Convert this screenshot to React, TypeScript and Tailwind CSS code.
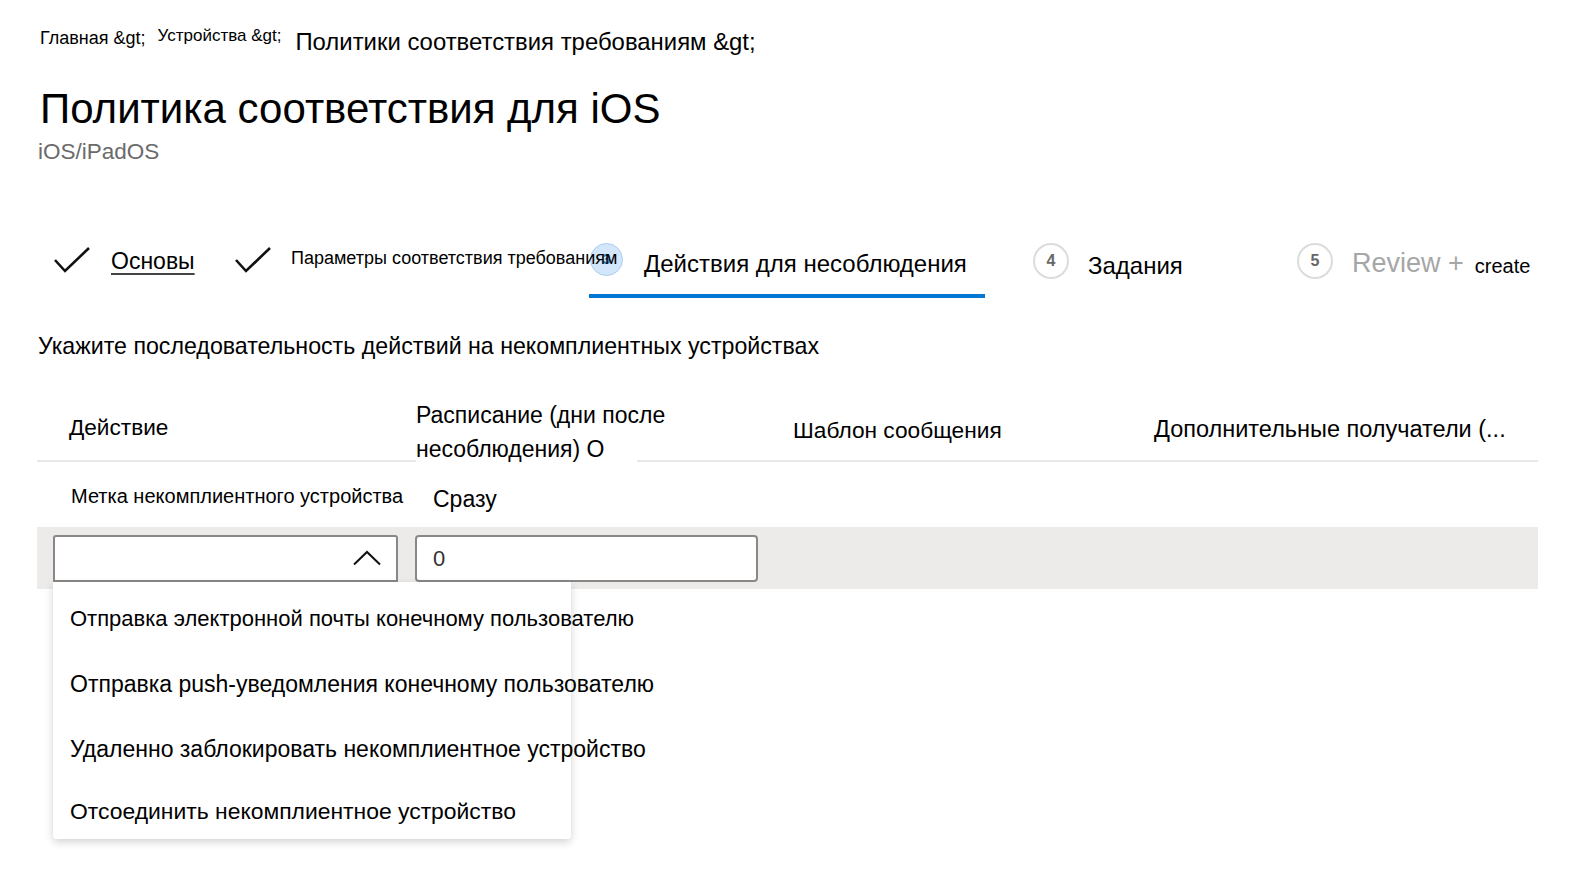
import React from "react";

const F = { fontFamily: "'Liberation Sans', Arial, sans-serif" };

function Check() {
  return (
    <svg width="38" height="28" viewBox="0 0 38 28" fill="none">
      <path d="M2 14 L12 25 L36 2" stroke="#111" strokeWidth="2.6" />
    </svg>
  );
}

function Circle({ n }: { n: string }) {
  return (
    <div className="w-[36px] h-[36px] shrink-0 mb-[10px] rounded-full border-2 border-[#dcdcdc] flex items-center justify-center text-[16px] font-bold text-[#666]">
      {n}
    </div>
  );
}

export default function App() {
  return (
    <div className="w-[1592px] h-[892px] bg-white text-black overflow-hidden" style={F}>
      {/* header */}
      <div className="pl-[40px]">
        <div className="flex items-start h-[56px] whitespace-nowrap">
          <span className="text-[18px] leading-none mt-[29px]">Главная &amp;gt;</span>
          <span className="text-[17px] leading-none ml-[12px] mt-[27px]">Устройства &amp;gt;</span>
          <span className="text-[23.9px] leading-none ml-[14px] mt-[30px]">Политики соответствия требованиям &amp;gt;</span>
        </div>
        <h1 className="text-[42px] leading-none mt-[32px] font-normal">Политика соответствия для iOS</h1>
        <div className="text-[22.5px] leading-none mt-[11px] text-[#6b6b6b] -ml-[2px]">iOS/iPadOS</div>
      </div>

      {/* tabs */}
      <div className="flex items-center h-[64px] mt-[70px] pl-[53px] whitespace-nowrap">
        <div className="w-[181px] flex items-center">
          <div className="mb-[12px]"><Check /></div>
          <span className="ml-[20px] mb-[8px] text-[23px] leading-none underline decoration-[#444] decoration-[1.5px] underline-offset-[4px]">Основы</span>
        </div>
        <div className="w-[356px] flex items-center relative z-10">
          <div className="mb-[12px]"><Check /></div>
          <span className="ml-[19px] mb-[16px] text-[18px] leading-none">Параметры соответствия требованиям</span>
        </div>
        <div className="w-[443px] h-full flex items-center">
          <div className="w-[396px] -ml-[1px] h-full border-b-4 border-[#0078d4] flex items-center pl-[1px]">
            <div className="w-[33px] h-[33px] shrink-0 mb-[8px] rounded-full bg-[#c6def7]/75 border border-[#a9cdf2] flex items-center justify-center text-[15px] font-bold text-[#2f7fd0]">3</div>
            <span className="ml-[21px] text-[24px] leading-none">Действия для несоблюдения</span>
          </div>
        </div>
        <div className="w-[264px] flex items-center">
          <Circle n="4" />
          <span className="ml-[19px] text-[24px] leading-none">Задания</span>
        </div>
        <div className="flex items-center">
          <Circle n="5" />
          <span className="ml-[19px] mb-[4px] text-[27px] leading-none text-[#a6a6a6]">Review +</span>
          <span className="ml-[11px] text-[20px] leading-none">create</span>
        </div>
      </div>

      {/* instruction */}
      <div className="pl-[38px] mt-[37px] text-[23.2px] leading-none whitespace-nowrap">
        Укажите последовательность действий на некомплиентных устройствах
      </div>

      {/* table */}
      <div className="ml-[37px] w-[1501px] mt-[38px]">
        <div className="flex h-[66px] border-b-2 border-[#e8e8e8] whitespace-nowrap">
          <div className="w-[379px] pl-[32px] pt-[21px] text-[22.6px] leading-none">Действие</div>
          <div className="w-[377px]">
            <div className="relative z-10 w-[221px] h-[70px] bg-white pt-[2px] text-[23px] leading-[34px]">
              Расписание (дни после
              <br />
              несоблюдения) О
            </div>
          </div>
          <div className="w-[361px] pt-[23px] text-[22.7px] leading-none">Шаблон сообщения</div>
          <div className="pt-[22px] text-[23.5px] leading-none">Дополнительные получатели (...</div>
        </div>

        <div className="flex h-[65px] items-center whitespace-nowrap">
          <div className="w-[379px] pl-[34px] mt-[4px] text-[20px] leading-none">Метка некомплиентного устройства</div>
          <div className="pl-[17px] mt-[10px] text-[23px] leading-none">Сразу</div>
        </div>

        <div className="h-[62px] bg-[#edebe9] flex items-start pt-[8px]">
          <div className="relative ml-[16px] w-[345px] h-[47px] bg-white border-2 border-[#8a8886] rounded-t-[3px] flex items-center justify-end pr-[15px]">
            <svg width="28" height="16" viewBox="0 0 28 16" fill="none">
              <path d="M1 14.5 L14 2 L27 14.5" stroke="#111" strokeWidth="2" />
            </svg>
            {/* dropdown menu */}
            <div className="absolute left-[-2px] top-[45px] z-20 w-[518px] h-[257px] bg-white rounded-b-[3px] shadow-[0_3px_8px_rgba(0,0,0,0.18)]">
              <div className="flex flex-col pt-[5px] pl-[17px] leading-none whitespace-nowrap">
                <div className="h-[65px] flex items-center text-[22px]">Отправка электронной почты конечному пользователю</div>
                <div className="h-[65px] flex items-center text-[23px]">Отправка push-уведомления конечному пользователю</div>
                <div className="h-[65px] flex items-center text-[23px]">Удаленно заблокировать некомплиентное устройство</div>
                <div className="h-[60px] flex items-center text-[22.9px]">Отсоединить некомплиентное устройство</div>
              </div>
            </div>
          </div>
          <div className="ml-[17px] w-[343px] h-[47px] bg-white border-2 border-[#8a8886] rounded-[4px] flex items-center pl-[16px] text-[22px] text-[#333]">
            0
          </div>
        </div>
      </div>
    </div>
  );
}
